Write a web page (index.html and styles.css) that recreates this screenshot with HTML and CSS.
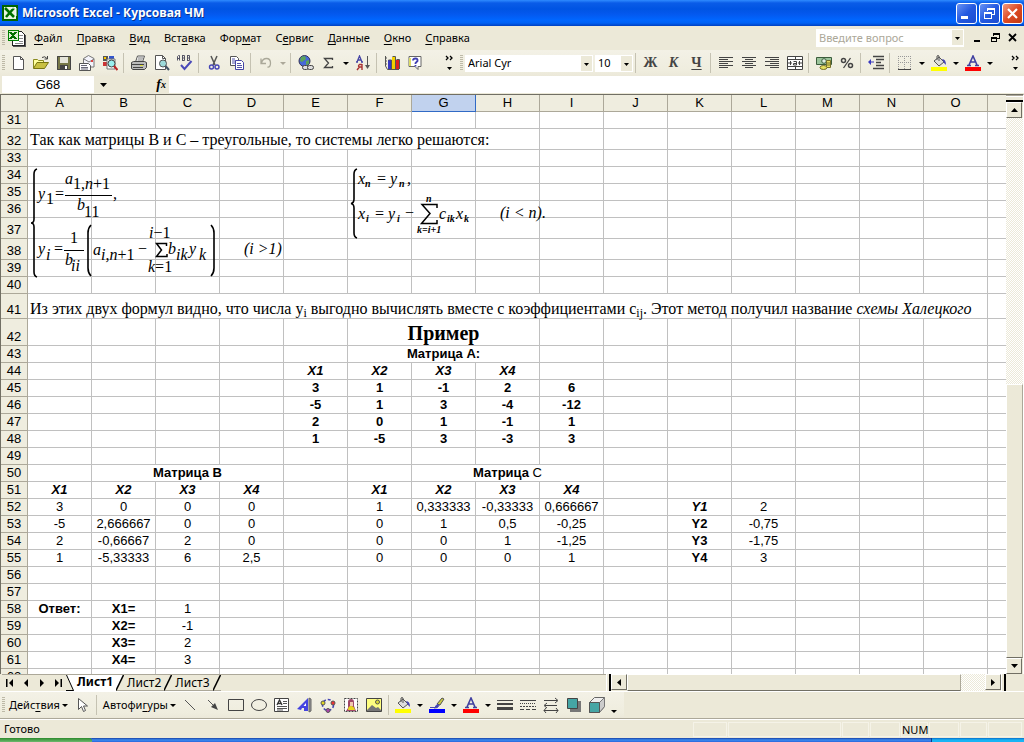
FILE: index.html
```html
<!DOCTYPE html>
<html lang="ru">
<head>
<meta charset="utf-8">
<title>Microsoft Excel - Курсовая ЧМ</title>
<link rel="stylesheet" href="styles.css">
</head>
<body>
<header class="titlebar">
  <svg class="app-icon" width="16" height="16" viewBox="0 0 16 16"><rect width="16" height="16" fill="#006400"/><rect x="2" y="2" width="12" height="12" fill="#e8f5e0"/><path d="M3 3l9 9M12 3L4 12" stroke="#007000" stroke-width="2.6"/><path d="M9 3h5v8" stroke="#fff" fill="none"/></svg>
  <h1 class="title">Microsoft Excel - Курсовая ЧМ</h1>
  <div class="win-buttons">
    <button class="win" aria-label="Свернуть"><svg width="19" height="19"><path d="M4 12h7v3H4z" fill="#fff"/></svg></button>
    <button class="win" aria-label="Восстановить"><svg width="19" height="19" fill="none" stroke="#fff" shape-rendering="crispEdges"><path d="M7.500 7V4.500h7v6H12M7 5.500h8M4.500 8.500h7v6h-7zM4 9.500h8"/></svg></button>
    <button class="win close" aria-label="Закрыть"><svg width="19" height="19"><path d="M5 5l9 9M14 5l-9 9" stroke="#fff" stroke-width="2.200"/></svg></button>
  </div>
</header>

<nav class="menubar">
  <span class="grip"></span>
  <svg class="doc-icon" width="19" height="18" viewBox="0 0 19 18" shape-rendering="crispEdges"><path d="M5.500 2.500h9l3 3v11h-12z" fill="#fff" stroke="#222"/><path d="M12 6h4M12 9h4M12 12h4M8 14h8" stroke="#888"/><path d="M18.500 6v11.500H6" stroke="#555" fill="none"/><rect x="1" y="1" width="11" height="11" fill="#008000"/><rect x="2" y="2" width="9" height="9" fill="#dff0d8"/><path d="M3 3l6 7M9 3l-6 7" stroke="#007000" stroke-width="2"/></svg>
  <button class="menu"><u>Ф</u>айл</button>
  <button class="menu"><u>П</u>равка</button>
  <button class="menu"><u>В</u>ид</button>
  <button class="menu">Вст<u>а</u>вка</button>
  <button class="menu">Фор<u>м</u>ат</button>
  <button class="menu">С<u>е</u>рвис</button>
  <button class="menu"><u>Д</u>анные</button>
  <button class="menu"><u>О</u>кно</button>
  <button class="menu"><u>С</u>правка</button>
  <label class="combo ask"><input type="text" placeholder="Введите вопрос" aria-label="Введите вопрос"><svg class="combo-arrow" width="11" height="16"><path d="M3 7h5L5.500 10z"/></svg></label>
  <button class="mdi" aria-label="Свернуть книгу"><svg width="12" height="12"><path d="M3 8h6v2H3z"/></svg></button>
  <button class="mdi" aria-label="Восстановить книгу"><svg width="12" height="12" fill="none" stroke="#000" shape-rendering="crispEdges"><path d="M4.500 4V1.500h6v5H8M4 2.500h7M2.500 5.500h5v4h-5zM2 6.500h6"/></svg></button>
  <button class="mdi" aria-label="Закрыть книгу"><svg width="12" height="12"><path d="M2 2l7 7M9 2L2 9" stroke="#000" stroke-width="1.800"/></svg></button>
</nav>

<div class="toolbars">
  <div class="toolbar standard">
    <span class="grip"></span>
    <button class="tool" aria-label="Создать"><svg viewBox="0 0 16 16"><path d="M3.500 1.500h7l3 3v10h-10z" fill="#fff" stroke="#555"/><path d="M10.500 1.500v3h3" fill="none" stroke="#555"/></svg></button>
    <button class="tool" aria-label="Открыть"><svg viewBox="0 0 16 16"><path d="M.5 13V4.500h4l1 1h5V8" fill="#ffff9c" stroke="#8a8a20"/><path d="M.5 13.500L4 7.500h11.500L11.500 13.500z" fill="#c8c040" stroke="#777510"/><path d="M9 2.500q3-2 5 1M14.500 1v3h-3" fill="none" stroke="#444"/></svg></button>
    <button class="tool" aria-label="Сохранить"><svg viewBox="0 0 16 16"><path d="M1 1h14v14H1z" fill="#777848"/><path d="M1.500 1.500h13v13h-13z" fill="none" stroke="#444"/><path d="M4 2h8v6H4z" fill="#e4e4da"/><path d="M4 10h8v4H4z" fill="#444"/><path d="M9 11h2v3H9z" fill="#fff"/></svg></button>
    <button class="tool" aria-label="Сообщение"><svg viewBox="0 0 16 16"><path d="M4.500 8V3.500l5-3 5.500 3V12h-3" fill="#f3f3fb" stroke="#777"/><path d="M5 4l5 3 5-3" fill="none" stroke="#777"/><path d="M12 5h2v2h-2z" fill="#d44"/><path d="M.5 8.500h9l2 2v5H.5z" fill="#fff" stroke="#555"/><path d="M2 10.500h6M2 12.500h7M2 14h7" stroke="#667"/></svg></button>
    <button class="tool" aria-label="Поиск"><svg viewBox="0 0 16 16"><path d="M1 1h5v5H1z" fill="#555"/><path d="M2 2h2v2H2z" fill="#fc0"/><path d="M7 1h5v4H7z" fill="#35c"/><path d="M1 7h4v4H1z" fill="#c33"/><path d="M5 4h8v10H5z" fill="#fff" stroke="#777"/><circle cx="9.500" cy="8.500" r="3.500" fill="#9ee" stroke="#444"/><path d="M12 11l3.500 4" stroke="#b22" stroke-width="2"/></svg></button>
    <span class="sep"></span>
    <button class="tool" aria-label="Печать"><svg viewBox="0 0 16 16"><path d="M4.500 7l2-6h7l-2 6z" fill="#fff" stroke="#555"/><path d="M7 3h5M6.500 5h5" stroke="#777"/><path d="M.5 7.500l2-1h11l2 1v5l-2 2H2l-1.500-1z" fill="#bbb" stroke="#444"/><path d="M1 9.500h12M2 12.500h10" stroke="#444"/><path d="M9 10h3v1H9z" fill="#dd3"/></svg></button>
    <button class="tool" aria-label="Предварительный просмотр"><svg viewBox="0 0 16 16"><path d="M1.500.5h7l3 3v11h-10z" fill="#fff" stroke="#555"/><path d="M8.500.5v3h3" fill="none" stroke="#555"/><circle cx="9" cy="8.500" r="3.500" fill="#9cdada" stroke="#555"/><path d="M11.500 11l3.500 4" stroke="#456" stroke-width="2"/></svg></button>
    <button class="tool" aria-label="Орфография"><svg viewBox="0 0 16 16"><path d="M.5 5.500V1.500l1-1h1v5M.5 3.500h2M5.500 0v6M5 .5h2.500v5H5M5 3h2.500M10.500 0v6M10 .5h2.500v5H10M10 3h2.500" fill="none" stroke="#556"/><path d="M4 10l3.500 4L14.500 6" fill="none" stroke="#4949b8" stroke-width="2"/></svg></button>
    <span class="sep"></span>
    <button class="tool" aria-label="Вырезать"><svg viewBox="0 0 16 16"><path d="M5 1l4 9M11 1L7 10" stroke="#555" stroke-width="1.500"/><circle cx="5.500" cy="12" r="2" fill="none" stroke="#4545b5" stroke-width="1.400"/><circle cx="11" cy="12" r="2" fill="none" stroke="#4545b5" stroke-width="1.400"/></svg></button>
    <button class="tool" aria-label="Копировать"><svg viewBox="0 0 16 16"><path d="M1.500 1.500h6l2 2v7h-8z" fill="#fff" stroke="#555"/><path d="M3 4h3M3 6h4M3 8h4" stroke="#55a"/><path d="M6.500 5.500h6l2 2v7h-8z" fill="#fff" stroke="#4545a5"/><path d="M8 8.500h4M8 10.500h5M8 12.500h5" stroke="#55a"/></svg></button>
    <span class="sep"></span>
    <button class="tool" aria-label="Отменить"><svg viewBox="0 0 16 16"><path d="M3 3.500v5h5M3.500 8q1-4.500 5-4.500t4 4.500-3 4" fill="none" stroke="#aaa899" stroke-width="1.300"/></svg></button><button class="drop off" aria-label="Список отмены"><i></i></button>
    <span class="sep"></span>
    <button class="tool" aria-label="Гиперссылка"><svg viewBox="0 0 16 16"><circle cx="6.500" cy="6" r="5.500" fill="#4668d8" stroke="#335"/><path d="M3 2l4-1 1 3-4 3-2-1zM8 6l3-1v4l-3 1z" fill="#5ba35b"/><rect x="4.500" y="10.500" width="6" height="4" rx="2" fill="#ddd" stroke="#444"/><rect x="9.500" y="10.500" width="6" height="4" rx="2" fill="#ddd" stroke="#444"/></svg></button>
    <button class="tool" aria-label="Автосумма"><svg viewBox="0 0 16 16"><path d="M11.500 5V3.500h-8L7.500 8 3.500 12.500h8V11" fill="none" stroke="#444" stroke-width="1.300"/></svg></button><button class="drop" aria-label="Функции"><i></i></button>
    <button class="tool" aria-label="Сортировка"><svg viewBox="0 0 16 16"><path d="M2 7l2.500-6L7 7M3 5h3M1 7h2M6 7h2" fill="none" stroke="#4545a5" stroke-width="1.300"/><path d="M7 9v6M7 9.500H4.500q-2 1.500 0 2.500H7M4.500 12L2 15" fill="none" stroke="#a33" stroke-width="1.400"/><path d="M12.500 1v11" stroke="#555"/><path d="M10 10h5l-2.500 4z" fill="#555"/></svg></button>
    <span class="sep"></span>
    <button class="tool" aria-label="Диаграмма"><svg viewBox="0 0 16 16"><path d="M1.500 1v10l2 3.500H15" fill="none" stroke="#555"/><path d="M1 3h2M1 6h2M1 9h2" stroke="#555"/><path d="M4 5h3v9H4z" fill="#3838c0"/><path d="M8 2h3v12H8z" fill="#f3d000"/><path d="M12 5h3v9h-3z" fill="#e02020"/><path d="M4.500 5h3v9M8.500 1.500h3V14M12.500 4.500h3V14" fill="none" stroke="#555"/></svg></button>
    <button class="tool" aria-label="Справка"><svg viewBox="0 0 16 16"><path d="M2 1.500h12v10h-3v3l-3-3H2z" fill="#fff" stroke="#666"/><path d="M3 3v8" stroke="#dd6" stroke-width="2"/><path d="M6 5.500q0-2 2.500-2t2 2.500L8.500 8v1M8.500 10v1.500" fill="none" stroke="#4040b0" stroke-width="1.800"/></svg></button>
    <button class="more" aria-label="Параметры панели"><svg width="10" height="18"><path d="M1 2l2 2-2 2M5 2l2 2-2 2" fill="none" stroke="#000" stroke-width="1.300"/><path d="M2 13h5l-2.500 3z"/></svg></button>
  </div>
  <div class="toolbar formatting">
    <span class="grip"></span>
    <label class="combo font"><select aria-label="Шрифт"><option>Arial Cyr</option></select><svg class="combo-arrow" width="11" height="16"><path d="M3 7h5L5.500 10z"/></svg></label>
    <label class="combo size"><select aria-label="Размер"><option>10</option></select><svg class="combo-arrow" width="11" height="16"><path d="M3 7h5L5.500 10z"/></svg></label>
    <span class="sep"></span>
    <button class="tool letter"><b>Ж</b></button>
    <button class="tool letter"><b><em>К</em></b></button>
    <button class="tool letter"><b><u>Ч</u></b></button>
    <span class="sep"></span>
    <button class="tool" aria-label="По левому краю"><svg viewBox="0 0 16 16" stroke="#444"><path d="M1 2.500h14M1 4.500h9M1 6.500h14M1 8.500h9M1 10.500h14M1 12.500h9"/></svg></button>
    <button class="tool" aria-label="По центру"><svg viewBox="0 0 16 16" stroke="#444"><path d="M1 2.500h14M4 4.500h8M1 6.500h14M4 8.500h8M1 10.500h14M4 12.500h8"/></svg></button>
    <button class="tool" aria-label="По правому краю"><svg viewBox="0 0 16 16" stroke="#444"><path d="M1 2.500h14M6 4.500h9M1 6.500h14M6 8.500h9M1 10.500h14M6 12.500h9"/></svg></button>
    <button class="tool" aria-label="Объединить"><svg viewBox="0 0 16 16"><path d="M.5 1.500h15v13H.5z" fill="#fff" stroke="#444"/><path d="M0 4.500h16M0 11.500h16M8.500 1v3M8.500 12v3" stroke="#444"/><path d="M1 8h4M11 8h4M3.500 6v4M12.500 6v4" stroke="#444"/><path d="M6.500 6.500h3v3.500h-3V8.500h3" fill="none" stroke="#444"/></svg></button>
    <span class="sep"></span>
    <button class="tool" aria-label="Денежный формат"><svg viewBox="0 0 16 16"><path d="M.5 2.500h15v7H.5z" fill="#9bc49b" stroke="#3c5c3c"/><circle cx="8" cy="6" r="2.300" fill="#e2f0e2" stroke="#3c5c3c"/><path d="M10.500 5.500h4v7h-4z" fill="#e8e060" stroke="#77702a"/><path d="M10 8h5M10 10h5" stroke="#77702a"/><ellipse cx="7.500" cy="12.500" rx="3.500" ry="2" fill="#e8e060" stroke="#77702a"/></svg></button>
    <button class="tool" aria-label="Процентный формат"><svg viewBox="0 0 16 16" fill="none" stroke="#444"><circle cx="4.500" cy="5.500" r="2" stroke-width="1.500"/><circle cx="11.500" cy="10.500" r="2" stroke-width="1.500"/><path d="M11.500 3L4.500 13" stroke-width="1.300"/></svg></button>
    <span class="sep"></span>
    <button class="tool" aria-label="Уменьшить отступ"><svg viewBox="0 0 16 16"><path d="M5 1.500h11M8 4.500h8M8 7.500h5M8 10.500h8M5 13.500h11" stroke="#444" stroke-width="1.500"/><path d="M0 7l3-3v6zM2 6.500h4v1H2z" fill="#3838c0"/></svg></button>
    <span class="sep"></span>
    <button class="tool" aria-label="Границы"><svg viewBox="0 0 16 16"><path d="M1.500 1v13M7.500 1v13M13.500 1v13M1 1.500h13M1 7.500h13" stroke="#999" stroke-dasharray="1 1"/><path d="M1 14.500h13" stroke="#444"/></svg></button><button class="drop" aria-label="Виды границ"><i></i></button>
    <button class="tool" aria-label="Цвет заливки"><svg viewBox="0 0 16 16"><path d="M3 6l5-4 5 5-5 4z" fill="#ddd" stroke="#555"/><path d="M6 5V1q1-1 2 0v5" fill="none" stroke="#555"/><path d="M11 4q4 0 4 6l-2-2z" fill="#4545b5"/><path d="M0 12h16v4H0z" fill="#ff0"/></svg></button><button class="drop" aria-label="Цвета заливки"><i></i></button>
    <button class="tool" aria-label="Цвет шрифта"><svg viewBox="0 0 16 16"><path d="M4 10L8 1l4 9M5.500 7h5M2 10.500h4M10 10.500h4" fill="none" stroke="#4040a0" stroke-width="1.600"/><path d="M0 12h16v4H0z" fill="#f00"/></svg></button><button class="drop" aria-label="Цвета шрифта"><i></i></button>
    <button class="more" aria-label="Параметры панели"><svg width="10" height="18"><path d="M1 2l2 2-2 2M5 2l2 2-2 2" fill="none" stroke="#000" stroke-width="1.300"/><path d="M2 13h5l-2.500 3z"/></svg></button>
  </div>
</div>

<div class="formula-bar">
  <input class="name-box" type="text" value="G68" aria-label="Имя">
  <button class="name-drop" aria-label="Список имён"><svg width="7" height="4"><path d="M0 0h7L3.500 4z"/></svg></button>
  <button class="fx" aria-label="Вставка функции"><i>f</i><sub>x</sub></button>
  <input class="formula-input" type="text" aria-label="Строка формул">
</div>

<main class="book">
  <div class="sheet">
    <table class="grid" id="grid"></table>

    <svg class="equation eq-y" width="260" height="114" viewBox="28 165 260 114">
      <g fill="none" stroke="#000">
        <path d="M37 169q-3 1-3 5v45q0 4-3 4q3 0 3 4v45q0 4 3 5" stroke-width="1.600"/>
        <path d="M65 195.500h47M64 250.500h20"/>
        <path d="M91 225q-3 3-3 8v35q0 5 3 8M211 225q3 3 3 8v35q0 5-3 8" stroke-width="1.600"/>
        <path d="M166.500 246v-2.500h-10l5 6.500-5 6.500h10.500v-2.500" stroke-width="1.500"/>
      </g>
      <g class="var">
        <text x="38" y="199">y</text><text x="65" y="184">a</text><text x="77" y="210">b</text><text x="113" y="199">,</text>
        <text x="38" y="254">y</text><text x="65" y="265">b</text><text x="93" y="255">a</text><text x="168" y="254">b</text><text x="189" y="254">y</text>
        <text x="46" y="260">i</text><text x="71" y="271">ii</text><text x="176" y="260">ik</text><text x="199" y="260">k</text>
        <text x="101" y="260">i,n<tspan class="num">+1</tspan></text>
        <text x="73" y="189"><tspan class="num">1,</tspan>n<tspan class="num">+1</tspan></text>
        <text x="149" y="238">i<tspan class="num">−1</tspan></text><text x="148" y="272">k<tspan class="num">=1</tspan></text>
        <text x="244" y="254">(i &gt;1)</text>
      </g>
      <g class="num">
        <text x="46" y="204">1</text><text x="55" y="199">=</text><text x="84" y="217">11</text>
        <text x="54" y="254">=</text><text x="70" y="243">1</text><text x="138" y="254">−</text>
      </g>
    </svg>

    <svg class="equation eq-x" width="220" height="76" viewBox="350 167 220 76">
      <g fill="none" stroke="#000">
        <path d="M357 169q-3 1-3 5v25q0 4-3 4.500q3 .5 3 4.500v25q0 4 3 5" stroke-width="1.600"/>
        <path d="M437 208v-3.500h-15l8 9-8.500 10h15.500v-3.500" stroke-width="1.500"/>
      </g>
      <g class="var">
        <text x="358" y="184">x</text><text x="390" y="184">y</text><text x="407" y="184">,</text>
        <text x="358" y="219">x</text><text x="388" y="219">y</text><text x="439" y="219">c</text><text x="456" y="219">x</text>
        <text x="500" y="218">(i &lt; n).</text>
      </g>
      <g class="small">
        <text x="365" y="187">n</text><text x="399" y="187">n</text><text x="366" y="222">i</text><text x="397" y="222">i</text>
        <text x="426" y="202">n</text><text x="417" y="233">k=i+1</text><text x="447" y="222">ik</text><text x="464" y="222">k</text>
      </g>
      <g class="num"><text x="377" y="184">=</text><text x="375" y="219">=</text><text x="405" y="218">−</text></g>
    </svg>
  </div>

  <div class="vscroll">
    <span class="split-h"></span>
    <button class="sb" aria-label="Вверх"><svg width="7" height="4"><path d="M0 4h7L3.500 0z"/></svg></button>
    <div class="track before"></div>
    <div class="thumb"></div>
    <button class="sb" aria-label="Вниз"><svg width="7" height="4"><path d="M0 0h7L3.500 4z"/></svg></button>
  </div>
</main>

<div class="tabrow">
  <div class="tabs">
    <button class="tabnav" aria-label="Первый лист"><svg width="8" height="8"><path d="M0 0h1.500v8H0zM7 0v8L3 4z"/></svg></button>
    <button class="tabnav" aria-label="Предыдущий лист"><svg width="8" height="8"><path d="M6 0v8L2 4z"/></svg></button>
    <button class="tabnav" aria-label="Следующий лист"><svg width="8" height="8"><path d="M2 0v8l4-4z"/></svg></button>
    <button class="tabnav" aria-label="Последний лист"><svg width="8" height="8"><path d="M6.500 0H8v8H6.500zM1 0v8l4-4z"/></svg></button>
    <button class="tab active"><svg class="slant" width="8" height="16"><path d="M0 0l8 16V0z" fill="#fff"/><path d="M.5 0l7 15.500" stroke="#000"/></svg><span>Лист1</span></button>
    <button class="tab"><svg class="slant" width="8" height="16"><path d="M0 0h7.500L0 15.500z" fill="#fff"/><path d="M7.500 0L0 15.500" stroke="#000" stroke-width="1.500"/></svg><span>Лист2</span></button>
    <button class="tab"><svg class="slant" width="8" height="16"><path d="M7.500 0L0 15.500" stroke="#000" stroke-width="1.500"/></svg><span>Лист3</span><svg class="slant" width="8" height="16"><path d="M7.500 0L0 15.500" stroke="#000" stroke-width="1.500"/></svg></button>
  </div>
  <div class="hscroll">
    <span class="split-v"></span>
    <button class="sb" aria-label="Влево"><svg width="4" height="7"><path d="M4 0v7L0 3.500z"/></svg></button>
    <div class="thumb"></div>
    <div class="track"></div>
    <button class="sb" aria-label="Вправо"><svg width="4" height="7"><path d="M0 0v7l4-3.500z"/></svg></button>
    <span class="split-v"></span>
  </div>
</div>

<div class="drawbar">
  <div class="toolbar drawing">
    <span class="grip"></span>
    <button class="textmenu"><span>Дейс<u>т</u>вия</span><i></i></button>
    <button class="tool" aria-label="Выбор объектов"><svg viewBox="0 0 16 16"><path d="M4.500 1.500v11l3-3 2 5 2-1-2-4.500h4z" fill="#fff" stroke="#555"/></svg></button>
    <span class="sep"></span>
    <button class="textmenu"><span>Автофи<u>г</u>уры</span><i></i></button>
    <button class="tool" aria-label="Линия"><svg viewBox="0 0 16 16"><path d="M3 3l10 10" stroke="#555"/></svg></button>
    <button class="tool" aria-label="Стрелка"><svg viewBox="0 0 16 16"><path d="M3 3l7 7" stroke="#555"/><path d="M13 13L6 10l4-4z" fill="#444"/></svg></button>
    <button class="tool" aria-label="Прямоугольник"><svg viewBox="0 0 16 16"><path d="M.5 2.500h15v11H.5z" fill="none" stroke="#444"/></svg></button>
    <button class="tool" aria-label="Овал"><svg viewBox="0 0 16 16"><ellipse cx="8" cy="8" rx="7.500" ry="5.500" fill="none" stroke="#444"/></svg></button>
    <button class="tool" aria-label="Надпись"><svg viewBox="0 0 16 16"><path d="M.5 1.500h14v13H.5z" fill="#fff" stroke="#444"/><path d="M3 8l2.500-5L8 8M4 6.500h3" fill="none" stroke="#333" stroke-width="1.300"/><path d="M9 4.500h4M9 6.500h4M3 9.500h10M3 11.500h10M3 13h6" stroke="#555"/></svg></button>
    <button class="tool" aria-label="WordArt"><svg viewBox="0 0 16 16"><path d="M12 1l2 1v12l-2 1z" fill="#999" stroke="#666"/><path d="M0 12L11 1v13H7v-3H5l-1 2z" fill="#4444e0"/><path d="M6.500 9H9V6z" fill="#fff"/></svg></button>
    <button class="tool" aria-label="Диаграмма"><svg viewBox="0 0 16 16"><circle cx="8" cy="8" r="5.500" fill="none" stroke="#4545b5" stroke-width="1.600" stroke-dasharray="3 2"/><circle cx="3" cy="6" r="2" fill="#e3d820" stroke="#555"/><circle cx="13" cy="6" r="2" fill="#e33" stroke="#555"/><circle cx="8" cy="13.500" r="2" fill="#a4a" stroke="#555"/></svg></button>
    <button class="tool" aria-label="Картинка"><svg viewBox="0 0 16 16"><path d="M1.500 1.500h13v13h-13z" fill="#fff" stroke="#444" stroke-dasharray="2 1"/><path d="M5 11V5q0-3 3-3t3 3v4l2 5H3z" fill="#a04868"/><path d="M7 5h3v4H7z" fill="#f3c8b0"/><path d="M5 13q0-4 3-4t4 4z" fill="#e8d820"/></svg></button>
    <button class="tool" aria-label="Рисунок"><svg viewBox="0 0 16 16"><path d="M.5 1.500h15v13H.5z" fill="#ffff80" stroke="#444"/><circle cx="11.500" cy="5" r="2" fill="#dd3" stroke="#555"/><path d="M1 13l5-5 4 3 2-1 3 3v1H1z" fill="#777"/></svg></button>
    <span class="sep"></span>
    <button class="tool" aria-label="Заливка"><svg viewBox="0 0 16 16"><path d="M3 6l5-4 5 5-5 4z" fill="#ddd" stroke="#555"/><path d="M6 5V1q1-1 2 0v5" fill="none" stroke="#555"/><path d="M11 4q4 0 4 6l-2-2z" fill="#4545b5"/><path d="M0 12h16v4H0z" fill="#ff0"/></svg></button><button class="drop" aria-label="Цвета заливки фигуры"><i></i></button>
    <button class="tool" aria-label="Цвет линий"><svg viewBox="0 0 16 16"><path d="M8 7l5-6 2 1-4 6z" fill="#cc4" stroke="#555"/><path d="M1 10.500h5q1-3 3-3l1 1q-1 3-5 2.500" fill="#4545b5" stroke="#4545b5"/><path d="M0 12h16v4H0z" fill="#00f"/></svg></button><button class="drop" aria-label="Цвета линий"><i></i></button>
    <button class="tool" aria-label="Цвет текста"><svg viewBox="0 0 16 16"><path d="M4 10L8 1l4 9M5.500 7h5M2 10.500h4M10 10.500h4" fill="none" stroke="#4040a0" stroke-width="1.600"/><path d="M0 12h16v4H0z" fill="#f00"/></svg></button><button class="drop" aria-label="Цвета текста"><i></i></button>
    <button class="tool" aria-label="Тип линии"><svg viewBox="0 0 16 16" fill="#444"><path d="M0 3h16v1H0zM0 6h16v2H0zM0 10h16v3H0z"/></svg></button>
    <button class="tool" aria-label="Тип штриха"><svg viewBox="0 0 16 16" stroke="#444"><path d="M0 3.500h16"/><path d="M0 6.500h16" stroke-dasharray="1 1"/><path d="M0 9.500h16" stroke-dasharray="2 1"/><path d="M0 12.500h16" stroke-dasharray="4 2"/></svg></button>
    <button class="tool" aria-label="Вид стрелки"><svg viewBox="0 0 16 16" fill="none" stroke="#444"><path d="M1 3.500h13M12 1l3 2.500L12 6M2 8.500h12M4 6L1 8.500 4 11M1 13.500h14M3 11l-2 2.500L3 16M13 11l2 2.500-2 2.500"/></svg></button>
    <button class="tool" aria-label="Тень"><svg viewBox="0 0 16 16"><path d="M4 4h11v11H4z" fill="#777"/><path d="M1.500 1.500h10v10h-10z" fill="#45a5a5" stroke="#444"/></svg></button>
    <button class="tool" aria-label="Объём"><svg viewBox="0 0 16 16"><path d="M.5 5.500l5-5h10v9l-5 6h-10z" fill="#eee" stroke="#666"/><path d="M10.500 5.500l5-5v9l-5 6z" fill="#ccc" stroke="#777"/><path d="M.5 5.500h10v10H.5z" fill="#45a5a5" stroke="#555"/></svg></button>
    <button class="drop low" aria-label="Параметры панели"><i></i></button>
  </div>
</div>

<footer class="status">
  <span class="ready">Готово</span>
  <span class="pane w34"></span><span class="pane w112"></span><span class="pane w26"></span><span class="pane w30"></span><span class="pane w26">NUM</span><span class="pane w30"></span><span class="pane w26"></span><span class="pane w34"></span>
</footer>
<div class="taskbar"><span class="start"></span><span class="tasks"></span><span class="tray"></span></div>
<script src="app.js"></script>
</body>
</html>
```
FILE: styles.css
```css
* { box-sizing: border-box; }
body {
  margin: 0;
  height: 100vh;
  display: flex;
  flex-direction: column;
  overflow: hidden;
  background: #ece9d8;
  color: #000;
  font: 11px/14px "Noto Sans", "Open Sans", sans-serif;
}
button, input, select {
  font: inherit;
  color: inherit;
  border: 0;
  padding: 0;
  margin: 0;
  background: none;
  border-radius: 0;
}
button { flex: none; display: flex; align-items: center; justify-content: center; }
u { text-decoration: underline; text-underline-offset: 2px; }

.titlebar {
  flex: none;
  height: 26px;
  display: flex;
  align-items: center;
  padding: 0 1px 0 2px;
  background: linear-gradient(#2f8bff 0, #0a5ce8 3px, #0054e3 9px, #0458ee 14px, #0066ff 20px, #0062f5 23px, #0040c0 26px);
}
.title {
  margin: 0 0 0 4px;
  flex: 1;
  font: bold 12px/18px "Open Sans", sans-serif;
  color: #fff;
  text-shadow: 1px 1px #0a2f8a;
}
.win-buttons { display: flex; gap: 2px; }
.win {
  width: 21px;
  height: 21px;
  border: 1px solid #fff;
  border-radius: 3px;
  background: linear-gradient(135deg, #6a94f5, #2459e0 50%, #1b4cd0);
}
.win.close { background: linear-gradient(135deg, #f09a80, #dd4a24 50%, #c23a12); }

.menubar {
  flex: none;
  height: 24px;
  display: flex;
  align-items: center;
  padding: 0 2px;
}
.grip {
  flex: none;
  width: 3px;
  height: 16px;
  margin-right: 1px;
  background: repeating-linear-gradient(#bdb9a7 0 1px, transparent 1px 2px);
}
.doc-icon { flex: none; margin: 0 1px; }
.menu { height: 20px; padding: 0 7px; }
.combo { position: relative; display: flex; height: 17px; background: #fff; }
.combo input, .combo select { flex: 1; min-width: 0; padding: 0 3px; appearance: none; outline: 0; }
.combo-arrow { position: absolute; right: 1px; top: 1px; background: #ece9d8; height: 15px; }
.ask { width: 148px; height: 18px; margin-left: auto; margin-right: 4px; }
.ask .combo-arrow { background: #ece9d8; }
.ask input::placeholder { color: #aca899; opacity: 1; }
.mdi { width: 18px; height: 18px; }

.toolbars { flex: none; display: flex; height: 26px; }
.toolbar {
  display: flex;
  align-items: center;
  padding-left: 2px;
  background: linear-gradient(#f3f1e6, #efedde 80%, #ebe8d9);
}
.standard { width: 458px; flex: none; }
.formatting { flex: 1; min-width: 0; }
.tool { width: 23px; height: 22px; }
.tool svg { width: 16px; height: 16px; }
.letter { font: 14px/16px "Liberation Serif", serif; color: #444; }
.sep { flex: none; width: 1px; height: 20px; margin: 0 3px 0 2px; background: #c5c2b2; }
.drop { width: 11px; height: 22px; }
.drop i, .textmenu i {
  border: solid transparent;
  border-width: 3px 3px 0;
  border-top-color: #000;
}
.drop.off i { border-top-color: #aca899; }
.drop.low { align-self: flex-end; height: 14px; }
.more { margin-left: auto; width: 16px; height: 24px; }
.font { width: 128px; margin: 0 2px 0 1px; }
.size { width: 38px; }

.formula-bar { flex: none; height: 18px; display: flex; padding: 0 0 1px 2px; }
.name-box { width: 92px; background: #fff; text-align: center; font: 13px/16px "Liberation Sans", sans-serif; }
.name-drop { width: 18px; }
.fx { width: 57px; justify-content: flex-end; padding-right: 3px; font: bold 14px/14px "Liberation Serif", serif; }
.fx sub { font-size: 10px; font-style: italic; }
.formula-input { flex: 1; min-width: 0; padding: 0 4px; background: #fff; }

.book { flex: 1; min-height: 0; display: flex; border-right: 1px solid #fff; border-top: 1px solid #716f64; }
.sheet { flex: 1; min-width: 0; position: relative; overflow: hidden; background: #fff; border-left: 1px solid #716f64; }
.grid {
  width: 100%;
  table-layout: fixed;
  border-collapse: separate;
  border-spacing: 0;
  font: 13px/16px "Liberation Sans", sans-serif;
}
.grid th, .grid td {
  height: 17px;
  padding: 0;
  border: solid #c0c0c0;
  border-width: 0 1px 1px 0;
  text-align: center;
  vertical-align: bottom;
  white-space: nowrap;
}
.grid .rest { border-right: 0; }
.grid th { background: #efeddf; border-color: #aca899; font-weight: normal; }
.grid th.current { background: #c1d2ee; border-color: #316ac5; }
.grid .h17 { height: 17px; }
.grid .h21 { height: 21px; }
.grid .h25 { height: 25px; }
.grid .h27 { height: 27px; }
.col-head { width: 64px; }
.col-index { width: 27px; }
.col-rest { width: auto; }
.grid .prose { padding-left: 2px; text-align: left; font: 16px/19px "Liberation Serif", serif; }
.prose sub { font-size: 12px; line-height: 0; vertical-align: -3px; }
.grid .heading { font: bold 20px/24px "Liberation Serif", serif; }
.grid .b { font-weight: bold; }
.grid .bi { font-weight: bold; font-style: italic; }
.plain { font-weight: normal; }

.equation { position: absolute; }
.eq-y { left: 27px; top: 70px; }
.eq-x { left: 349px; top: 72px; }
.equation .var { font: italic 16px "Liberation Serif", serif; }
.equation .num { font: 16px "Liberation Serif", serif; }
.equation .small { font: italic bold 10px "Liberation Serif", serif; }

.vscroll { flex: none; width: 17px; display: flex; flex-direction: column; border-top: 1px solid #aca899; }
.split-h { flex: none; height: 6px; background: #ece9d8; border-top: 1px solid #fff; border-bottom: 2px solid #000; }
.sb {
  width: 16px;
  height: 16px;
  background: #ece9d8;
  border: 1px solid #fff;
  border-right-color: #716f64;
  border-bottom-color: #716f64;
}
.track { background: repeating-conic-gradient(#ece9d8 0 25%, #fff 0 50%) 0 0 / 2px 2px; }
.track.before { flex: 267; }
.thumb {
  background: #ece9d8;
  border: 1px solid #fff;
  border-right-color: #aca899;
  border-bottom-color: #716f64;
}
.vscroll .thumb { flex: 273; }

.tabrow { flex: none; height: 18px; display: flex; padding: 0 18px 0 2px; border-bottom: 1px solid #fff; }
.tabs { flex: 604; display: flex; align-items: flex-start; border-top: 1px solid #aca899; }
.tabnav { width: 16px; height: 16px; }
.tab { height: 16px; font: 12px/14px "Noto Sans", sans-serif; border-bottom: 1px solid #aca899; }
.tab.active { font-weight: bold; border-color: #000; }
.tab.active span { background: #fff; height: 16px; }
.tab span { display: block; padding: 0 3px; }
.slant { flex: none; }
.hscroll { flex: 400; display: flex; }
.split-v { flex: none; width: 5px; border-left: 1px solid #fff; border-right: 2px solid #000; }
.hscroll .thumb { flex: 335; }
.hscroll .track { flex: 24; }

.drawbar { flex: none; display: flex; height: 27px; border-bottom: 1px solid #aca899; }
.drawing { padding-right: 4px; }
.textmenu { padding: 0 3px; gap: 2px; height: 22px; }

.status { flex: none; height: 19px; display: flex; align-items: center; gap: 1px; padding: 0 2px 0 4px; border-top: 1px solid #fff; }
.ready { flex: 1; }
.pane { height: 15px; border: 1px solid #f5f3e8; text-align: center; white-space: nowrap; line-height: 13px; }
.w26 { width: 27px; }
.w30 { width: 30px; }
.w34 { width: 34px; }
.w112 { width: 113px; }
.taskbar { flex: none; height: 4px; display: flex; background: #245edb; }
.start { flex: 92; background: linear-gradient(#2c8a2c, #6fb96f); border-radius: 0 3px 0 0; }
.tasks { flex: 840; background: linear-gradient(#1941a5, #3c8cf0 2px, #2a66dc); }
.tray { flex: 92; background: linear-gradient(#0a6cc8, #18b4f4 2px); border-left: 1px solid #0a3c8a; }
```
FILE: app.js
```js
const letters = "ABCDEFGHIJKLMNO".split("");
const heights = { 32: "h21", 37: "h21", 38: "h21", 41: "h25", 42: "h27" };

// Cell entries: column letter -> [text, class, colspan]
const rows = {
  32: { A: ["Так как матрицы В и С – треугольные, то системы легко решаются:", "prose", 8] },
  41: { A: ["Из этих двух формул видно, что числа y<sub>i</sub> выгодно вычислять вместе с коэффициентами с<sub>ij</sub>. Этот метод получил название <em>схемы Халецкого</em>", "prose", 15] },
  42: { F: ["Пример", "heading", 3] },
  43: { F: ["Матрица А:", "b", 3] },
  44: { E: ["X1", "bi"], F: ["X2", "bi"], G: ["X3", "bi"], H: ["X4", "bi"] },
  45: { E: ["3", "b"], F: ["1", "b"], G: ["-1", "b"], H: ["2", "b"], I: ["6", "b"] },
  46: { E: ["-5", "b"], F: ["1", "b"], G: ["3", "b"], H: ["-4", "b"], I: ["-12", "b"] },
  47: { E: ["2", "b"], F: ["0", "b"], G: ["1", "b"], H: ["-1", "b"], I: ["1", "b"] },
  48: { E: ["1", "b"], F: ["-5", "b"], G: ["3", "b"], H: ["-3", "b"], I: ["3", "b"] },
  50: { B: ["Матрица В", "b", 3], G: ["Матрица <span class=\"plain\">С</span>", "b", 3] },
  51: { A: ["X1", "bi"], B: ["X2", "bi"], C: ["X3", "bi"], D: ["X4", "bi"], F: ["X1", "bi"], G: ["X2", "bi"], H: ["X3", "bi"], I: ["X4", "bi"] },
  52: { A: ["3"], B: ["0"], C: ["0"], D: ["0"], F: ["1"], G: ["0,333333"], H: ["-0,33333"], I: ["0,666667"], K: ["Y1", "bi"], L: ["2"] },
  53: { A: ["-5"], B: ["2,666667"], C: ["0"], D: ["0"], F: ["0"], G: ["1"], H: ["0,5"], I: ["-0,25"], K: ["Y2", "b"], L: ["-0,75"] },
  54: { A: ["2"], B: ["-0,66667"], C: ["2"], D: ["0"], F: ["0"], G: ["0"], H: ["1"], I: ["-1,25"], K: ["Y3", "b"], L: ["-1,75"] },
  55: { A: ["1"], B: ["-5,33333"], C: ["6"], D: ["2,5"], F: ["0"], G: ["0"], H: ["0"], I: ["1"], K: ["Y4", "b"], L: ["3"] },
  58: { A: ["Ответ:", "b"], B: ["X1=", "b"], C: ["1"] },
  59: { B: ["X2=", "b"], C: ["-1"] },
  60: { B: ["X3=", "b"], C: ["2"] },
  61: { B: ["X4=", "b"], C: ["3"] }
};

let html = "<colgroup><col class=\"col-index\">" + "<col class=\"col-head\">".repeat(15) + "<col class=\"col-rest\"></colgroup>";
html += "<thead><tr><th class=\"h17\"></th>";
for (const l of letters) {
  html += `<th scope="col"${l === "G" ? " class=\"current\"" : ""}>${l}</th>`;
}
html += "<th class=\"rest\"></th></tr></thead><tbody>";
for (let n = 31; n <= 62; n++) {
  html += `<tr><th scope="row" class="${heights[n] || "h17"}">${n}</th>`;
  const row = rows[n] || {};
  for (let c = 0; c < letters.length; c++) {
    const [text, cls, span] = row[letters[c]] || [""];
    html += `<td${cls ? ` class="${cls}"` : ""}${span ? ` colspan="${span}"` : ""}>${text}</td>`;
    if (span) c += span - 1;
  }
  html += "<td class=\"rest\"></td></tr>";
}
document.getElementById("grid").innerHTML = html + "</tbody>";
```
